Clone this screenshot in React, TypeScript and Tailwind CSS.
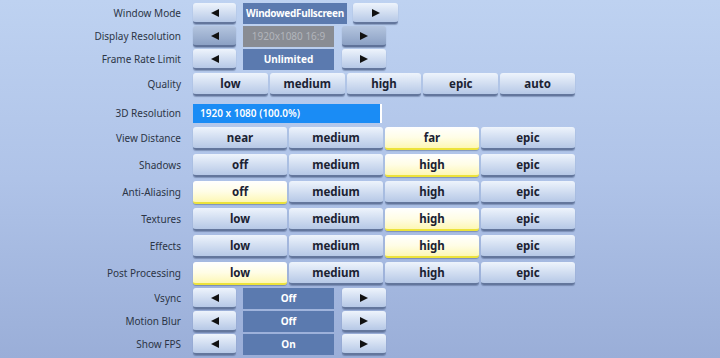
import React from 'react';

const font = { fontFamily: '"Noto Sans", "Open Sans", sans-serif' };

function Tri({ dir }: { dir: 'l' | 'r' }) {
  return (
    <svg width="8" height="8" viewBox="0 0 8 8">
      {dir === 'l' ? <polygon points="0,4 8,0 8,8" fill="#111" /> : <polygon points="8,4 0,0 0,8" fill="#111" />}
    </svg>
  );
}

const btn =
  'flex items-center justify-center rounded-[3px] border-b-2 text-[11.5px] font-bold text-[#1b2232] shadow-[0_1px_1px_rgba(40,60,100,0.35)]';
const normal = 'bg-gradient-to-b from-[#eef4fc] to-[#b6c8e6] border-[#63769c]';
const picked = 'bg-gradient-to-b from-[#ffffff] via-[#fffde6] to-[#fdf7b4] border-[#ece23a]';

function Label({ text }: { text: string }) {
  return <div className="w-[182px] shrink-0 pr-[1px] text-right text-[10px] text-[#2c3546]">{text}</div>;
}

function ArrowRow({ label, value, wide, disabled }: { label: string; value: string; wide?: boolean; disabled?: boolean }) {
  const arrow = disabled
    ? 'bg-gradient-to-b from-[#b4c5df] to-[#8ca1c4] border-[#5f7298]'
    : normal;
  return (
    <div className="flex h-[21px] items-center gap-[11px]">
      <Label text={label} />
      <div className="flex h-full items-stretch">
        <div className={`${btn} ${arrow} w-[43px]`}><Tri dir="l" /></div>
        <div
          className={`ml-[7px] flex items-center justify-center whitespace-nowrap text-[10px] ${
            disabled ? 'bg-[#898c93] font-normal text-[#b2b5bb]' : 'bg-[#5b7aaf] font-bold text-white'
          } ${wide ? 'w-[104px] tracking-[-0.3px]' : 'w-[91px]'}`}
        >
          {value}
        </div>
        <div className={`${btn} ${arrow} ${wide ? 'ml-[6px] w-[45px]' : 'ml-[8px] w-[44px]'}`}><Tri dir="r" /></div>
      </div>
    </div>
  );
}

function ChoiceRow({ label, options, selected, h = 'h-[23px]' }: { label: string; options: string[]; selected?: number; h?: string }) {
  const cols = options.length === 5 ? 'grid-cols-5' : 'grid-cols-4';
  return (
    <div className={`flex ${h} items-center gap-[11px]`}>
      <Label text={label} />
      <div className={`grid ${cols} h-full w-[382px] gap-[2px]`}>
        {options.map((o, i) => (
          <div key={o} className={`${btn} ${i === selected ? picked : normal}`}>{o}</div>
        ))}
      </div>
    </div>
  );
}

const four = ['low', 'medium', 'high', 'epic'];

export default function App() {
  return (
    <div
      className="h-[358px] w-[720px] overflow-hidden bg-gradient-to-b from-[#bed2f1] via-[#afc3e8] to-[#9aaed8]"
      style={font}
    >
      <div className="flex flex-col pt-[3px]">
        <div className="flex flex-col gap-[2px]">
          <ArrowRow label="Window Mode" value="WindowedFullscreen" wide />
          <ArrowRow label="Display Resolution" value="1920x1080 16:9" disabled />
          <ArrowRow label="Frame Rate Limit" value="Unlimited" />
        </div>
        <div className="mt-[3px]">
          <ChoiceRow label="Quality" options={['low', 'medium', 'high', 'epic', 'auto']} />
        </div>
        <div className="mt-[8px] flex h-[19px] items-center gap-[11px]">
          <Label text="3D Resolution" />
          <div className="flex h-full">
            <div className="flex w-[187px] items-center bg-[#1a8cf5] pl-[7px] text-[10px] font-semibold text-white">
              1920 x 1080 (100.0%)
            </div>
            <div className="w-[2px] bg-white" />
          </div>
        </div>
        <div className="mt-[4px] flex flex-col gap-[4px]">
          <ChoiceRow label="View Distance" options={['near', 'medium', 'far', 'epic']} selected={2} />
          <ChoiceRow label="Shadows" options={['off', 'medium', 'high', 'epic']} selected={2} />
          <ChoiceRow label="Anti-Aliasing" options={['off', 'medium', 'high', 'epic']} selected={0} />
          <ChoiceRow label="Textures" options={four} selected={2} />
          <ChoiceRow label="Effects" options={four} selected={2} />
          <ChoiceRow label="Post Processing" options={four} selected={0} />
        </div>
        <div className="mt-[3px] flex flex-col gap-[2px]">
          <ArrowRow label="Vsync" value="Off" />
          <ArrowRow label="Motion Blur" value="Off" />
          <ArrowRow label="Show FPS" value="On" />
        </div>
      </div>
    </div>
  );
}
